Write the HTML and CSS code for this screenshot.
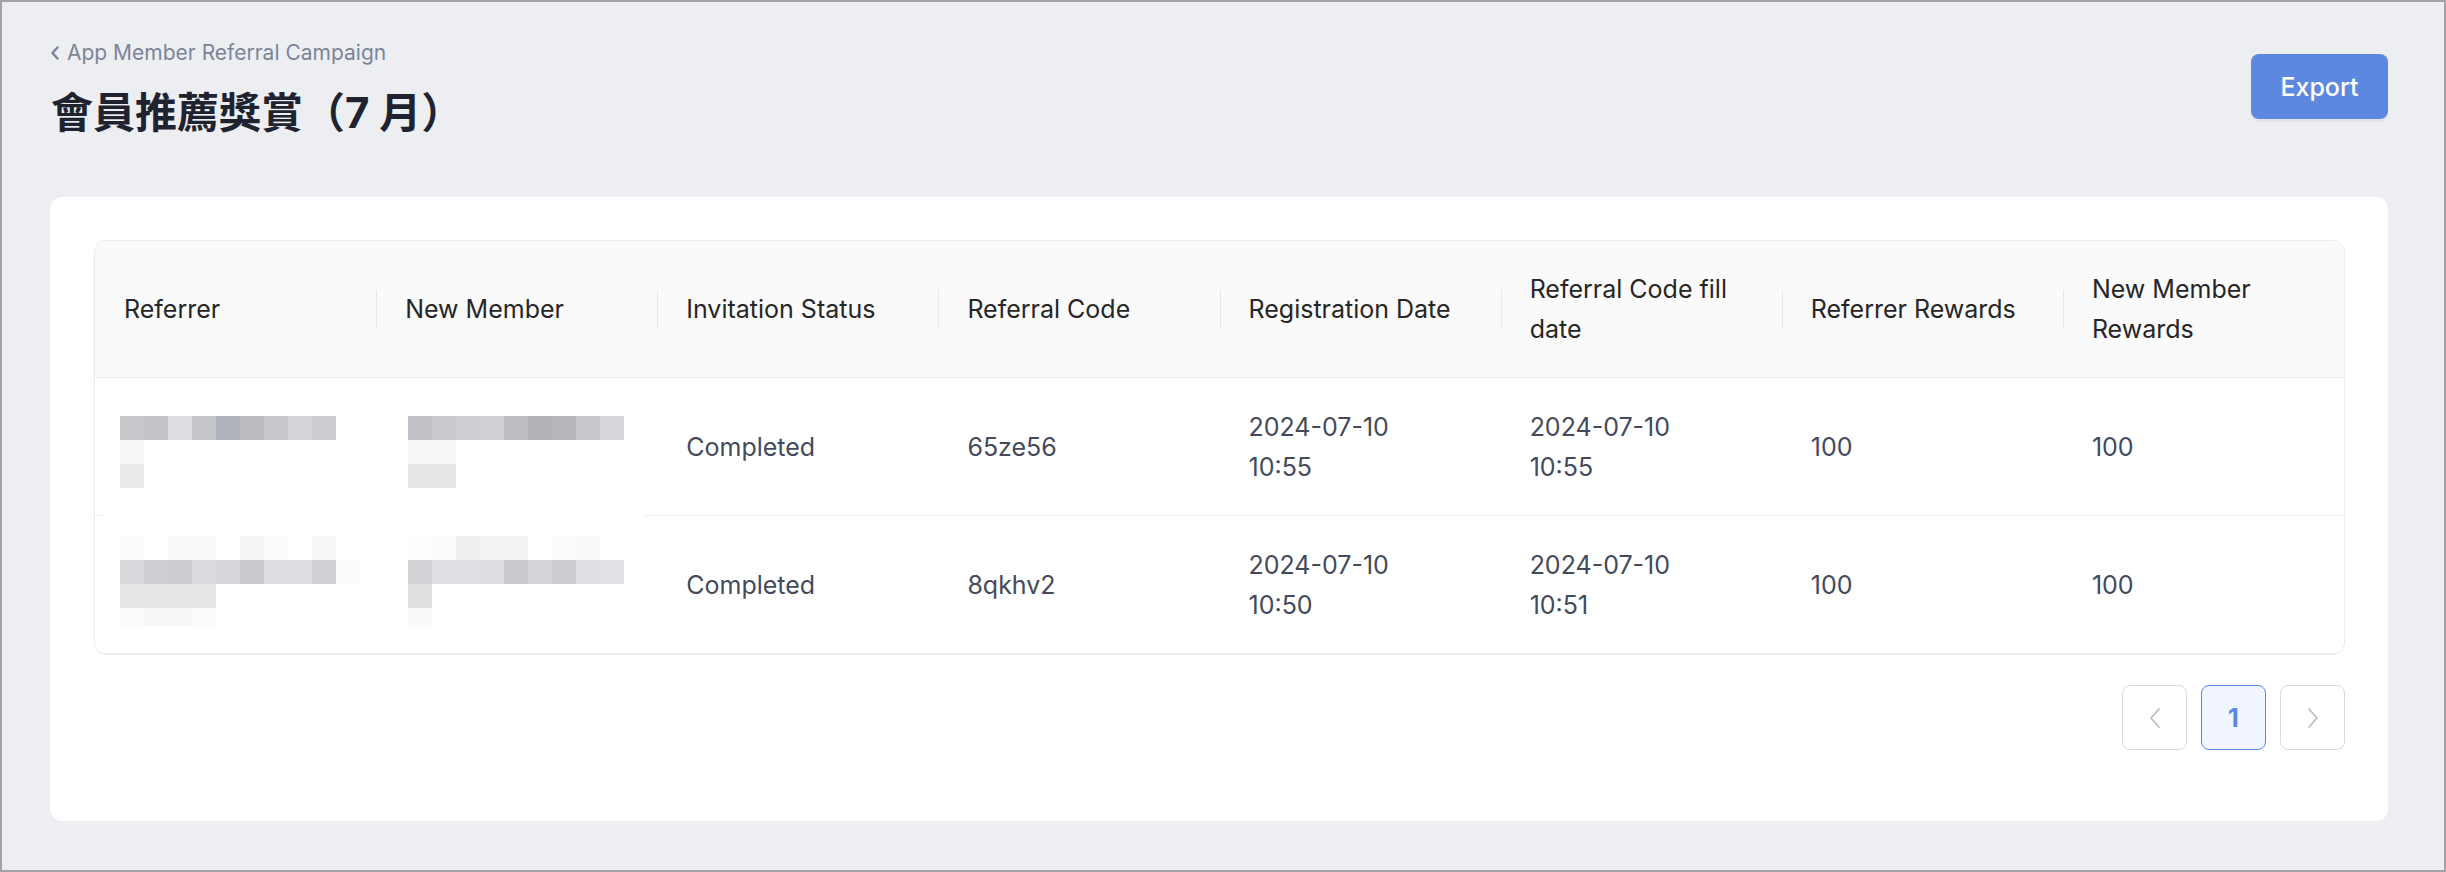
FILE: index.html
```html
<!DOCTYPE html>
<html lang="zh-Hant">
<head>
<meta charset="utf-8">
<title>會員推薦獎賞（7 月）</title>
<link rel="stylesheet" href="styles.css">
</head>
<body>
<div class="frame">
  <div class="page">
    <div class="head">
      <div class="head-left">
        <a class="crumb" href="#">
          <svg class="crumb-icon" viewBox="0 0 10 14" width="10" height="14"><polyline points="7.5,1.5 2.5,7 7.5,12.5" fill="none" stroke="currentColor" stroke-width="2.4" stroke-linecap="round" stroke-linejoin="round"/></svg>
          <span>App Member Referral Campaign</span>
        </a>
        <h1 class="title">會員推薦獎賞（7 月）</h1>
      </div>
      <button class="btn-export">Export</button>
    </div>

    <div class="card">
      <div class="table">
        <div class="row row-head">
          <div class="th">Referrer</div>
          <div class="th">New Member</div>
          <div class="th">Invitation Status</div>
          <div class="th">Referral Code</div>
          <div class="th">Registration Date</div>
          <div class="th">Referral Code fill date</div>
          <div class="th">Referrer Rewards</div>
          <div class="th">New Member Rewards</div>
        </div>
        <div class="row row-body">
          <div class="td"></div>
          <div class="td"></div>
          <div class="td">Completed</div>
          <div class="td">65ze56</div>
          <div class="td">2024-07-10<br>10:55</div>
          <div class="td">2024-07-10<br>10:55</div>
          <div class="td">100</div>
          <div class="td">100</div>
        </div>
        <div class="row row-body">
          <div class="td"></div>
          <div class="td"></div>
          <div class="td">Completed</div>
          <div class="td">8qkhv2</div>
          <div class="td">2024-07-10<br>10:50</div>
          <div class="td">2024-07-10<br>10:51</div>
          <div class="td">100</div>
          <div class="td">100</div>
        </div>

        <div class="mosaic" aria-hidden="true">
          <i style="grid-area:1/1;background:#c8c9cd"></i>
          <i style="grid-area:1/2;background:#c2c3c7"></i>
          <i style="grid-area:1/3;background:#dcdde0"></i>
          <i style="grid-area:1/4;background:#c6c7cb"></i>
          <i style="grid-area:1/5;background:#b1b4bc"></i>
          <i style="grid-area:1/6;background:#babbc0"></i>
          <i style="grid-area:1/7;background:#c8c9cd"></i>
          <i style="grid-area:1/8;background:#d5d6d9"></i>
          <i style="grid-area:1/9;background:#cbccd0"></i>
          <i style="grid-area:2/1;background:#f8f8f8"></i>
          <i style="grid-area:3/1;background:#e9eaec"></i>

          <i style="grid-area:1/13;background:#c1c2c7"></i>
          <i style="grid-area:1/14;background:#cacbcf"></i>
          <i style="grid-area:1/15;background:#cdced2"></i>
          <i style="grid-area:1/16;background:#cfd0d3"></i>
          <i style="grid-area:1/17;background:#bcbdc2"></i>
          <i style="grid-area:1/18;background:#b1b3b8"></i>
          <i style="grid-area:1/19;background:#b7b8bd"></i>
          <i style="grid-area:1/20;background:#c7c8cc"></i>
          <i style="grid-area:1/21;background:#d7d8db"></i>
          <i style="grid-area:2/13;background:#f8f8f8"></i>
          <i style="grid-area:2/14;background:#f7f7f7"></i>
          <i style="grid-area:3/13;background:#e4e5e7"></i>
          <i style="grid-area:3/14;background:#e4e5e7"></i>

          <i style="grid-area:6/1;background:#fcfcfc"></i>
          <i style="grid-area:6/3;background:#fafafa"></i>
          <i style="grid-area:6/4;background:#f9f9f9"></i>
          <i style="grid-area:6/6;background:#f4f4f4"></i>
          <i style="grid-area:6/7;background:#fcfcfc"></i>
          <i style="grid-area:6/9;background:#f8f8f8"></i>
          <i style="grid-area:7/1;background:#d8d9dd"></i>
          <i style="grid-area:7/2;background:#cdced2"></i>
          <i style="grid-area:7/3;background:#cccdd1"></i>
          <i style="grid-area:7/4;background:#dadbdf"></i>
          <i style="grid-area:7/5;background:#d6d7da"></i>
          <i style="grid-area:7/6;background:#c9cace"></i>
          <i style="grid-area:7/7;background:#dcdde0"></i>
          <i style="grid-area:7/8;background:#dcdde1"></i>
          <i style="grid-area:7/9;background:#ced0d3"></i>
          <i style="grid-area:7/10;background:#fbfbfb"></i>
          <i style="grid-area:8/1;background:#e5e6e8"></i>
          <i style="grid-area:8/2;background:#e6e7e9"></i>
          <i style="grid-area:8/3;background:#e4e5e7"></i>
          <i style="grid-area:8/4;background:#e4e5e7"></i>
          <i style="grid-area:9/1;background:#fcfcfc"></i>
          <i style="grid-area:9/2;background:#f8f8f8"></i>
          <i style="grid-area:9/3;background:#f8f8f8"></i>
          <i style="grid-area:9/4;background:#fcfcfc"></i>

          <i style="grid-area:6/13;background:#fdfdfd"></i>
          <i style="grid-area:6/14;background:#fcfcfc"></i>
          <i style="grid-area:6/15;background:#eeeff1"></i>
          <i style="grid-area:6/16;background:#f2f2f3"></i>
          <i style="grid-area:6/17;background:#f3f3f4"></i>
          <i style="grid-area:6/19;background:#fcfcfc"></i>
          <i style="grid-area:6/20;background:#f9f9f9"></i>
          <i style="grid-area:7/13;background:#d2d3d7"></i>
          <i style="grid-area:7/14;background:#dfe0e3"></i>
          <i style="grid-area:7/15;background:#dfe0e4"></i>
          <i style="grid-area:7/16;background:#dcdde0"></i>
          <i style="grid-area:7/17;background:#c9cacf"></i>
          <i style="grid-area:7/18;background:#d3d4d8"></i>
          <i style="grid-area:7/19;background:#cbccd0"></i>
          <i style="grid-area:7/20;background:#dfe0e3"></i>
          <i style="grid-area:7/21;background:#e1e2e5"></i>
          <i style="grid-area:8/13;background:#dedfe1"></i>
          <i style="grid-area:9/13;background:#fafafa"></i>
        </div>
      </div>

      <div class="pager">
        <button class="pg pg-arrow" aria-label="Previous">
          <svg viewBox="0 0 16 24" width="16" height="24"><polyline points="12,3 4,12 12,21" fill="none" stroke="currentColor" stroke-width="1.8" stroke-linecap="round" stroke-linejoin="round"/></svg>
        </button>
        <button class="pg pg-active">1</button>
        <button class="pg pg-arrow" aria-label="Next">
          <svg viewBox="0 0 16 24" width="16" height="24"><polyline points="4,3 12,12 4,21" fill="none" stroke="currentColor" stroke-width="1.8" stroke-linecap="round" stroke-linejoin="round"/></svg>
        </button>
      </div>
    </div>
  </div>
</div>
</body>
</html>
```

FILE: styles.css
```css
* { box-sizing: border-box; }

html, body {
  margin: 0;
  padding: 0;
}

body {
  font-family: Inter, "Noto Sans CJK TC", sans-serif;
  background: #edeef1;
}

.frame {
  width: 2446px;
  height: 872px;
  border: 2px solid #a3a3a5;
  background: #edeef1;
  overflow: hidden;
}

.page {
  padding: 37px 56px 0 48px;
}

.head {
  display: flex;
  justify-content: space-between;
  align-items: flex-start;
}

.head-left {
  display: flex;
  flex-direction: column;
}

.crumb {
  display: flex;
  align-items: center;
  gap: 7px;
  color: #7b8599;
  font-size: 21px;
  line-height: 28px;
  text-decoration: none;
}

.crumb-icon {
  display: block;
}

.title {
  margin: 18px 0 0 1px;
  font-family: Inter, "Noto Sans CJK TC", sans-serif;
  font-size: 42px;
  font-weight: 700;
  line-height: 56px;
  color: #1f2330;
}

.btn-export {
  margin-top: 15px;
  width: 137px;
  height: 65px;
  border: none;
  border-radius: 8px;
  background: #5d88e0;
  color: #ffffff;
  font-family: Inter, sans-serif;
  font-size: 25px;
  font-weight: 500;
  box-shadow: 0 3px 0 rgba(0, 0, 0, 0.035);
  cursor: pointer;
}

.card {
  margin-top: 56px;
  background: #ffffff;
  border-radius: 12px;
  padding: 43px 43px 71px 44px;
}

.table {
  position: relative;
  border: 1px solid #ebebef;
  border-radius: 12px;
  overflow: hidden;
}

.row {
  display: grid;
  grid-template-columns: repeat(8, 1fr);
}

.row-head {
  background: #fafafa;
  border-bottom: 1px solid #ebebee;
  min-height: 137px;
}

.th {
  position: relative;
  display: flex;
  align-items: center;
  padding: 0 29px;
  font-size: 25px;
  line-height: 40px;
  color: #262626;
}

.th + .th::before {
  content: "";
  position: absolute;
  left: 0;
  top: 50%;
  width: 1px;
  height: 39px;
  margin-top: -19px;
  background: #e8e8ea;
}

.row-body {
  border-bottom: 1px solid #efeff2;
}

.row-body:last-of-type {
  border-bottom: none;
}

.td {
  display: flex;
  align-items: center;
  padding: 28px 29px;
  min-height: 137px;
  font-size: 25px;
  line-height: 40px;
  color: #444a59;
}

.mosaic {
  position: absolute;
  left: 11px;
  top: 151px;
  width: 538px;
  height: 235px;
  background: #ffffff;
  overflow: hidden;
  padding: 24px 0 0 14px;
  display: grid;
  grid-template-columns: repeat(22, 24px);
  grid-template-rows: repeat(9, 24px);
}

.mosaic i {
  display: block;
}

.pager {
  display: flex;
  justify-content: flex-end;
  gap: 14px;
  margin-top: 30px;
}

.pg {
  width: 65px;
  height: 65px;
  border: 1px solid #d9d9d9;
  border-radius: 8px;
  background: #ffffff;
  display: flex;
  align-items: center;
  justify-content: center;
  padding: 0;
  font-family: Inter, sans-serif;
  cursor: pointer;
}

.pg-arrow {
  color: #bfbfbf;
}

.pg-arrow svg {
  display: block;
}

.pg-active {
  border-color: #5d88e0;
  background: #f0f5ff;
  color: #5d88e0;
  font-size: 25px;
  font-weight: 700;
}
```
